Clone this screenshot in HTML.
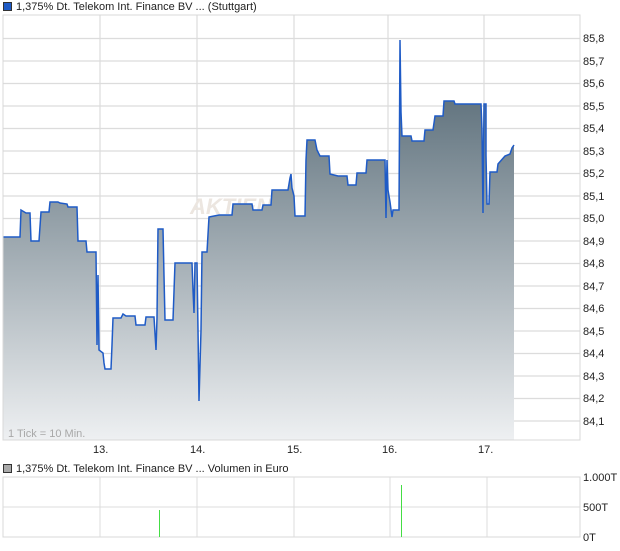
<!DOCTYPE html>
<html><head><meta charset="utf-8"><style>
body{margin:0;width:620px;height:546px;background:#fff;font-family:"Liberation Sans",sans-serif;overflow:hidden}
</style></head><body>
<svg width="620" height="546" xmlns="http://www.w3.org/2000/svg" font-family="Liberation Sans, sans-serif">
<defs>
<linearGradient id="g" x1="0" y1="100" x2="0" y2="440" gradientUnits="userSpaceOnUse">
<stop offset="0" stop-color="#637580"/><stop offset="1" stop-color="#eef0f2"/>
</linearGradient>
</defs>
<rect x="3" y="15" width="577" height="425" fill="#fff" stroke="#d8d8d8"/>
<g stroke="#dcdcdc" stroke-width="1.2">
<line x1="3" y1="38.5" x2="580" y2="38.5"/><line x1="3" y1="61" x2="580" y2="61"/><line x1="3" y1="83.5" x2="580" y2="83.5"/><line x1="3" y1="106" x2="580" y2="106"/><line x1="3" y1="128.5" x2="580" y2="128.5"/><line x1="3" y1="151" x2="580" y2="151"/><line x1="3" y1="173.5" x2="580" y2="173.5"/><line x1="3" y1="196" x2="580" y2="196"/><line x1="3" y1="218.5" x2="580" y2="218.5"/><line x1="3" y1="241" x2="580" y2="241"/><line x1="3" y1="263.5" x2="580" y2="263.5"/><line x1="3" y1="286" x2="580" y2="286"/><line x1="3" y1="308.5" x2="580" y2="308.5"/><line x1="3" y1="331" x2="580" y2="331"/><line x1="3" y1="353.5" x2="580" y2="353.5"/><line x1="3" y1="376" x2="580" y2="376"/><line x1="3" y1="398.5" x2="580" y2="398.5"/><line x1="3" y1="421" x2="580" y2="421"/>
<line x1="100" y1="15" x2="100" y2="440"/><line x1="197" y1="15" x2="197" y2="440"/><line x1="294" y1="15" x2="294" y2="440"/><line x1="388" y1="15" x2="388" y2="440"/><line x1="484" y1="15" x2="484" y2="440"/>
</g>
<text x="190" y="214" font-size="22" font-style="italic" font-weight="bold" fill="#ece6e0">AKTIEN</text>
<path fill="url(#g)" stroke="none" d="M3,237 L20,237 L21,210 L26,213 L30,213 L31,241 L39,241 L41,212 L49,212 L50,202 L58,202 L60,203 L67,204 L68,207 L77,207 L78,241 L86,241 L87,252 L96,252 L97,345 L98,275 L99,350 L103,353 L104,363 L105,369 L111,369 L112,345 L113,318 L121,318 L123,314 L126,316 L135,316 L136,325 L145,325 L146,317 L154,317 L156,350 L157,318 L158,229 L163,229 L164,276 L165,320 L173,320 L175,263 L192,263 L193,290 L194,313 L195,263 L197,263 L198,330 L199,401 L201,330 L202,252 L207,252 L209,217 L219,215 L232,215 L233,204 L252,204 L253,210 L262,210 L263,205 L271,205 L272,190 L288,190 L290,178 L291,174 L292,188 L294,196 L295,216 L305,216 L306,160 L307,140 L315,140 L317,150 L320,156 L329,156 L330,174 L338,176 L347,176 L348,185 L356,185 L357,173 L366,173 L367,160 L385,160 L386,218 L387,160 L388,190 L390,202 L392,217 L393,210 L399,210 L400,40 L401,112 L402,136 L411,136 L412,141 L424,141 L425,130 L433,130 L435,116 L443,116 L444,101 L454,101 L455,104 L481,104 L482,130 L483,213 L484,104 L486,104 L486,155 L487,204 L489,204 L490,172 L497,172 L498,164 L505,156 L510,154 L512,148 L514,145 L514,440 L3,440 Z"/>
<path fill="none" stroke="#1f5bc6" stroke-width="1.5" d="M3,237 L20,237 L21,210 L26,213 L30,213 L31,241 L39,241 L41,212 L49,212 L50,202 L58,202 L60,203 L67,204 L68,207 L77,207 L78,241 L86,241 L87,252 L96,252 L97,345 L98,275 L99,350 L103,353 L104,363 L105,369 L111,369 L112,345 L113,318 L121,318 L123,314 L126,316 L135,316 L136,325 L145,325 L146,317 L154,317 L156,350 L157,318 L158,229 L163,229 L164,276 L165,320 L173,320 L175,263 L192,263 L193,290 L194,313 L195,263 L197,263 L198,330 L199,401 L201,330 L202,252 L207,252 L209,217 L219,215 L232,215 L233,204 L252,204 L253,210 L262,210 L263,205 L271,205 L272,190 L288,190 L290,178 L291,174 L292,188 L294,196 L295,216 L305,216 L306,160 L307,140 L315,140 L317,150 L320,156 L329,156 L330,174 L338,176 L347,176 L348,185 L356,185 L357,173 L366,173 L367,160 L385,160 L386,218 L387,160 L388,190 L390,202 L392,217 L393,210 L399,210 L400,40 L401,112 L402,136 L411,136 L412,141 L424,141 L425,130 L433,130 L435,116 L443,116 L444,101 L454,101 L455,104 L481,104 L482,130 L483,213 L484,104 L486,104 L486,155 L487,204 L489,204 L490,172 L497,172 L498,164 L505,156 L510,154 L512,148 L514,145"/>
<rect x="3" y="15" width="577" height="425" fill="none" stroke="#d8d8d8"/>
<text x="8" y="437" font-size="11" fill="#a8a8a8">1 Tick = 10 Min.</text>
<g font-size="11" fill="#222">
<text x="583" y="42">85,8</text><text x="583" y="65">85,7</text><text x="583" y="87">85,6</text><text x="583" y="110">85,5</text><text x="583" y="132">85,4</text><text x="583" y="155">85,3</text><text x="583" y="177">85,2</text><text x="583" y="200">85,1</text><text x="583" y="222">85,0</text><text x="583" y="245">84,9</text><text x="583" y="267">84,8</text><text x="583" y="290">84,7</text><text x="583" y="312">84,6</text><text x="583" y="335">84,5</text><text x="583" y="357">84,4</text><text x="583" y="380">84,3</text><text x="583" y="402">84,2</text><text x="583" y="425">84,1</text>
<text x="93" y="453">13.</text><text x="190" y="453">14.</text><text x="287" y="453">15.</text><text x="382" y="453">16.</text><text x="478" y="453">17.</text>
<text x="583" y="481">1.000T</text><text x="583" y="511">500T</text><text x="583" y="541">0T</text>
<text x="16" y="10">1,375% Dt. Telekom Int. Finance BV ... (Stuttgart)</text>
<text x="16" y="472">1,375% Dt. Telekom Int. Finance BV ... Volumen in Euro</text>
</g>
<rect x="3.5" y="2.5" width="8" height="8" fill="#1f5bc6" stroke="#333"/>
<rect x="3.5" y="464.5" width="8" height="8" fill="#aaa" stroke="#333"/>
<rect x="3" y="477" width="577" height="60" fill="#fff" stroke="#d8d8d8"/>
<g stroke="#dcdcdc"><line x1="3" y1="507" x2="580" y2="507"/><line x1="100" y1="477" x2="100" y2="537"/><line x1="197" y1="477" x2="197" y2="537"/><line x1="294" y1="477" x2="294" y2="537"/><line x1="390" y1="477" x2="390" y2="537"/><line x1="487" y1="477" x2="487" y2="537"/></g>
<rect x="159" y="510" width="1" height="27" fill="#44dd44"/>
<rect x="401" y="485" width="1" height="52" fill="#44dd44"/>
</svg>
</body></html>
